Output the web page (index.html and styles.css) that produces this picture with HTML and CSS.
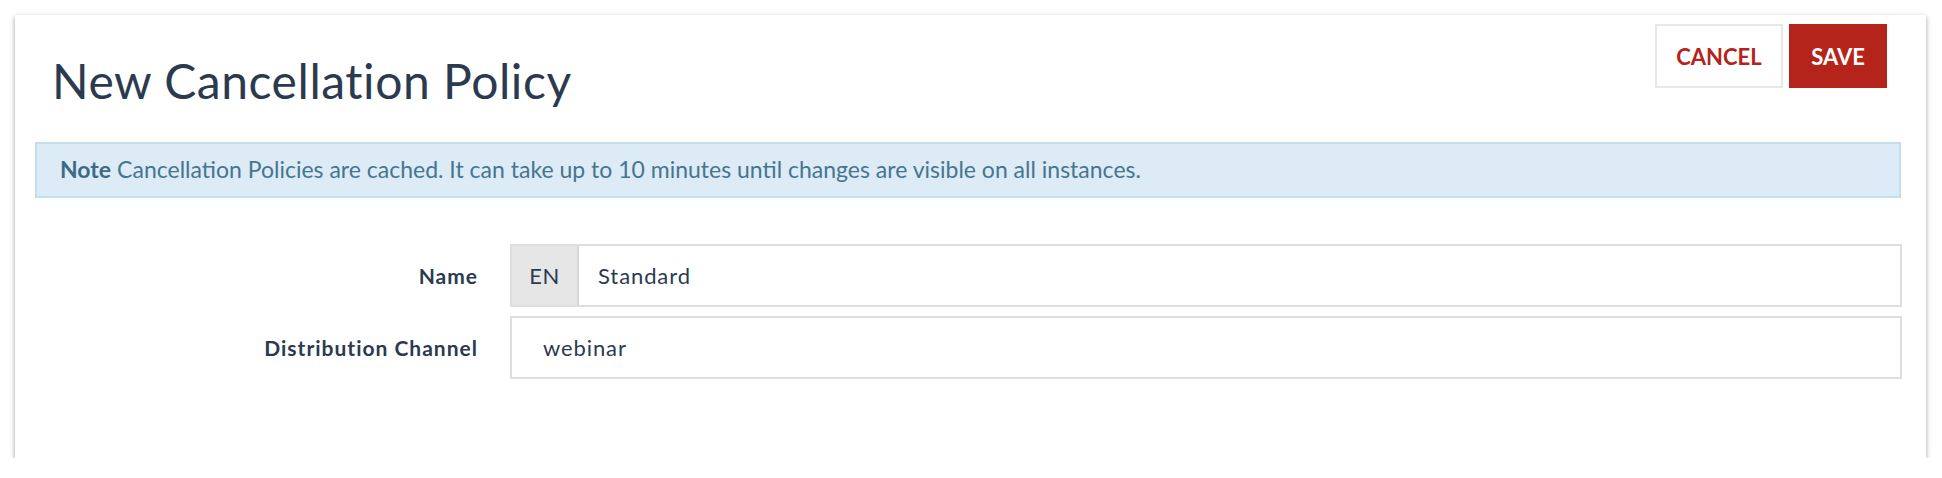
FILE: index.html
```html
<!DOCTYPE html>
<html lang="en">
<head>
<meta charset="utf-8">
<title>New Cancellation Policy</title>
<link rel="stylesheet" href="styles.css">
</head>
<body>
<div class="card">
  <div class="header">
    <h1 class="title">New Cancellation Policy</h1>
    <div class="actions">
      <button class="btn btn-cancel">CANCEL</button>
      <button class="btn btn-save">SAVE</button>
    </div>
  </div>
  <div class="alert"><strong>Note</strong> Cancellation Policies are cached. It can take up to 10 minutes until changes are visible on all instances.</div>
  <div class="form">
    <div class="row">
      <label class="label">Name</label>
      <div class="field">
        <span class="addon">EN</span>
        <span class="value value-addon">Standard</span>
      </div>
    </div>
    <div class="row">
      <label class="label">Distribution Channel</label>
      <div class="field">
        <span class="value">webinar</span>
      </div>
    </div>
  </div>
</div>
</body>
</html>
```

FILE: styles.css
```css
* { box-sizing: border-box; }
html, body { margin: 0; padding: 0; background: #fff; }
body { font-family: "Lato", "Liberation Sans", sans-serif; color: #2c3a50; }
.card {
  margin: 15px 16px 0 15px;
  height: 443px;
  background: #fff;
  box-shadow: 0 2px 5px rgba(0,0,0,0.38);
}
.header {
  display: flex;
  justify-content: space-between;
  align-items: flex-start;
  padding: 9px 39px 0 37px;
  height: 127px;
}
.title {
  margin: 28px 0 0 0;
  font-size: 48px;
  line-height: 58px;
  font-weight: 400;
  letter-spacing: 0.55px;
  color: #2c3a50;
}
.actions { display: flex; gap: 6px; }
.btn {
  height: 64px;
  font-family: inherit;
  font-size: 22px;
  font-weight: 700;
  border: 2px solid transparent;
  padding: 0;
}
.btn-cancel { width: 128px; background: #fff; border-color: #e8e8e8; color: #b5241b; }
.btn-save { width: 98px; background: #b5241b; color: #fff; border-color: #b5241b; }
.alert {
  margin: 0 25px 0 20px;
  height: 56px;
  display: flex;
  align-items: center;
  padding: 0 0 2px 23px;
  background: #ddebf6;
  border: 2px solid #c0e0ea;
  color: #46758f;
  font-size: 23px;
}
.alert strong { font-weight: 700; color: #3d6a86; margin-right: 6px; }
.form {
  padding: 46px 24px 0 0;
  display: flex;
  flex-direction: column;
  gap: 9px;
}
.row { display: flex; align-items: center; }
.label {
  width: 463px;
  text-align: right;
  font-weight: 700;
  font-size: 21px;
  letter-spacing: 1px;
  color: #2c3a50;
}
.field {
  margin-left: 32px;
  flex: 1;
  height: 63px;
  display: flex;
  align-items: stretch;
  border: 2px solid #dedede;
  font-size: 22px;
  letter-spacing: 0.9px;
  color: #2c3a50;
}
.addon {
  width: 67px;
  display: flex;
  align-items: center;
  justify-content: center;
  background: #e6e6e6;
  border-right: 2px solid #d8d8d8;
  letter-spacing: 0.5px;
}
.value { display: flex; align-items: center; padding-left: 31px; }
.value-addon { padding-left: 19px; }
```
